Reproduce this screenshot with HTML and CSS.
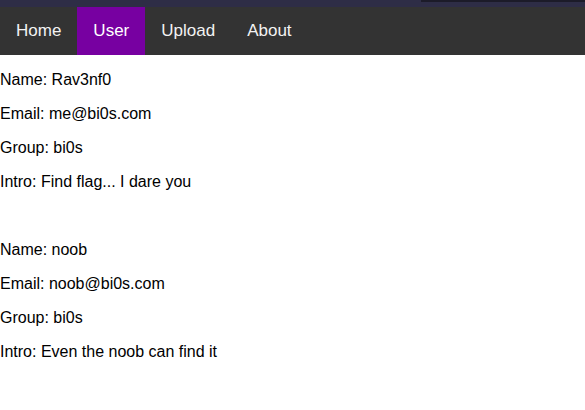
FILE: index.html
```html
<!DOCTYPE html>
<html>
<head>
<meta charset="utf-8">
<title>User</title>
<link rel="stylesheet" href="styles.css">
</head>
<body>
<div class="strip"><div class="strip-edge"></div></div>
<nav class="topnav">
  <a href="#">Home</a>
  <a href="#" class="active">User</a>
  <a href="#">Upload</a>
  <a href="#">About</a>
</nav>
<div class="users">
  <div class="user">
    <p>Name: Rav3nf0</p>
    <p>Email: me@bi0s.com</p>
    <p>Group: bi0s</p>
    <p>Intro: Find flag... I dare you</p>
  </div>
  <br>
  <div class="user">
    <p>Name: noob</p>
    <p>Email: noob@bi0s.com</p>
    <p>Group: bi0s</p>
    <p>Intro: Even the noob can find it</p>
  </div>
</div>
</body>
</html>
```
FILE: styles.css
```css
html, body {
  margin: 0;
  padding: 0;
  background: #ffffff;
}
body {
  font-family: "Liberation Sans", Arial, sans-serif;
  font-size: 16px;
  color: #000;
}
.strip {
  height: 7px;
  background: #2e2d46;
  display: flex;
  justify-content: flex-end;
}
.strip-edge {
  width: 164px;
  height: 2px;
  background: #1c1b29;
}
.topnav {
  display: flex;
  background: #333333;
}
.topnav a {
  display: block;
  color: #f2f2f2;
  text-decoration: none;
  padding: 14px 16px;
  font-size: 17px;
}
.topnav a.active {
  background: #7700a1;
  color: #ffffff;
}
.users p {
  margin: 16px 0;
}
```
